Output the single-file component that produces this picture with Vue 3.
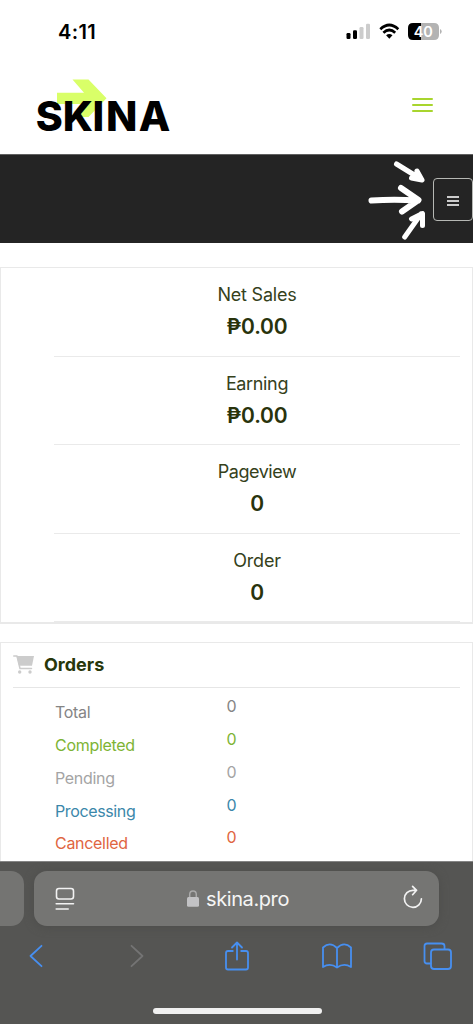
<script setup>
const stats = [
  { label: 'Net Sales', value: '₱0.00', cls: 'net' },
  { label: 'Earning', value: '₱0.00', cls: 'earning' },
  { label: 'Pageview', value: '0', cls: 'pageview' },
  { label: 'Order', value: '0', cls: 'order' },
]
const orders = [
  { label: 'Total', count: 0, cls: 'total' },
  { label: 'Completed', count: 0, cls: 'completed' },
  { label: 'Pending', count: 0, cls: 'pending' },
  { label: 'Processing', count: 0, cls: 'processing' },
  { label: 'Cancelled', count: 0, cls: 'cancelled' },
]
</script>

<template>
  <div class="screen">
    <div class="status">
      <span class="time">4:11</span>
      <svg class="indicators" width="98" height="20" viewBox="0 0 98 20">
        <rect x="0.5" y="11" width="4" height="6" rx="1.2" fill="#000" />
        <rect x="7" y="8.3" width="4" height="8.7" rx="1.2" fill="#000" />
        <rect x="13.500" y="5" width="4" height="12" rx="1.2" fill="#ccc" />
        <rect x="20" y="1.800" width="4" height="15.200" rx="1.200" fill="#ccc" />
        <g fill="none" stroke="#000" stroke-width="2.700">
          <path d="M34.300 7.200Q43.300-1.200 52.300 7.200" />
          <path d="M37.400 10.700Q43.300 5.300 49.200 10.700" />
        </g>
        <path d="M40.100 13.300Q43.300 10.700 46.500 13.300L43.300 16.700Z" fill="#000" />
        <path d="M67 1H75V18H67Q62 18 62 13V6Q62 1 67 1Z" fill="#000" />
        <path d="M75 1H88Q93 1 93 6V13Q93 18 88 18H75Z" fill="#b3b3b3" />
        <path d="M94 7Q95.700 7.600 95.700 9.500T94 12Z" fill="#b3b3b3" />
        <text x="77.300" y="14.700" text-anchor="middle" class="battery">40</text>
      </svg>
    </div>

    <header class="header">
      <svg class="logo" width="136" height="74" viewBox="0 0 136 74">
        <path d="M37.500 3.500H53.500L71.500 22.300L53.500 41H39L49 28H22V16.700H49Z" fill="#d9ff68" />
        <text x="0.7 27.700 57.500 71 103.700" y="55.300" class="brand">SKINA</text>
      </svg>
      <div class="burger"><i></i><i></i><i></i></div>
    </header>

    <nav class="band">
      <svg class="arrows" width="64" height="88" viewBox="365 154 64 88" fill="none" stroke="#fff" stroke-linecap="round" stroke-linejoin="round">
        <g stroke-width="5">
          <path d="M396.500 164L420 178.500M417 171L422 180L411.500 178" />
          <path d="M404.700 237L421 214M411.500 219L422.500 213.500L422.500 225.500" />
        </g>
        <path d="M416 173L420.500 179L412.500 177Z" fill="#fff" stroke-width="4" />
        <path stroke-width="6" d="M371.500 200.500Q394 199 418 200.500M401 188L418.500 200L402 211.500" />
      </svg>
      <div class="toggle"><i></i><i></i><i></i></div>
    </nav>

    <section class="stats">
      <div v-for="s in stats" :key="s.label" class="stat">
        <div class="label" :class="s.cls">{{ s.label }}</div>
        <div class="value">{{ s.value }}</div>
      </div>
    </section>

    <section class="orders">
      <div class="title">
        <svg width="22" height="20" viewBox="0 0 22 20">
          <path d="M3.500 1H21L19 10.700H6Z" fill="#ccc" />
          <path d="M.7 1H4L7 13.500H18.500" fill="none" stroke="#ccc" stroke-width="1.500" stroke-linecap="round" stroke-linejoin="round" />
          <circle cx="6.700" cy="17" r="1.700" fill="#ccc" />
          <circle cx="17" cy="17" r="1.700" fill="#ccc" />
        </svg>
        <span>Orders</span>
      </div>
      <div v-for="o in orders" :key="o.label" class="row" :class="o.cls">
        <span class="name">{{ o.label }}</span><span class="count">{{ o.count }}</span>
      </div>
    </section>

    <footer class="browser">
      <div class="tabs">
        <div class="prev"></div>
        <div class="address">
          <svg width="20" height="24" viewBox="0 0 20 24" fill="none" stroke="#f2f2f2" stroke-width="1.600" stroke-linecap="round">
            <rect x="1.500" y="1.500" width="17" height="10.500" rx="2.500" />
            <path d="M1.200 16.700H18.500M1.200 22H13.200" />
          </svg>
          <div class="site">
            <svg width="12" height="17" viewBox="0 0 12 17">
              <path d="M2.700 8V4.500Q2.700 1 6 1T9.300 4.500V8" fill="none" stroke="#aaa" stroke-width="1.500" />
              <rect y="7" width="12" height="9.700" rx="1.500" fill="#c2c2c4" />
            </svg>
            <span>skina.pro</span>
          </div>
          <svg class="reload" width="20" height="24" viewBox="0 0 20 24" fill="none" stroke="#f2f2f2" stroke-width="1.700" stroke-linecap="round" stroke-linejoin="round">
            <path d="M18.400 13.800A8.500 8.500 0 1 1 10 5.300H13.500M9.600 1.300L13.600 5.300L9.600 9.700" />
          </svg>
        </div>
      </div>
      <div class="tools">
        <svg width="14" height="24" viewBox="0 0 14 24"><path d="M12.500 1.800L1.500 12L12.500 22.200" /></svg>
        <svg class="off" width="14" height="24" viewBox="0 0 14 24"><path d="M1.500 1.800L12.500 12L1.500 22.200" /></svg>
        <svg width="26" height="32" viewBox="0 0 26 32"><path d="M8.800 11H4Q2 11 2 13V27.500Q2 29.500 4 29.500H22Q24 29.500 24 27.500V13Q24 11 22 11H17.200M13 19.500V2.700M8 7.500L13 2.500L18 7.500" /></svg>
        <svg width="30" height="28" viewBox="0 0 30 28"><path d="M15 6Q8-1 1 5.500V25Q8 20.500 15 25.500Q22 20.500 29 25V5.500Q22-1 15 6V25.500" /></svg>
        <svg width="30" height="28" viewBox="0 0 30 28"><path d="M7.500 21.500H4Q1.500 21.500 1.500 19V4Q1.500 1.500 4 1.500H18.500Q21.500 1.500 21.500 4V7" /><rect x="8" y="7.500" width="20" height="19.500" rx="3" /></svg>
      </div>
      <div class="home"></div>
    </footer>
  </div>
</template>

<style>
body { margin: 0; background: #fff; }
</style>

<style scoped>
* { box-sizing: border-box; }
.screen { width: 473px; height: 1024px; overflow: hidden; display: flex; flex-direction: column; background: #fff; font-family: Inter, "Liberation Sans", sans-serif; }
svg { display: block; flex: none; }
.status { height: 62px; flex: none; display: flex; justify-content: space-between; padding: 20px 29px 0 58px; }
.time { font-size: 20px; line-height: 24px; font-weight: 600; letter-spacing: .4px; }
.indicators { margin-top: 2px; }
.battery { font: 600 14.5px Inter, sans-serif; fill: #fff; }
.header { height: 92px; flex: none; display: flex; justify-content: space-between; padding: 14px 40px 0 35px; }
.brand { font: 800 41px Inter, sans-serif; fill: #000; }
.burger { display: flex; flex-direction: column; gap: 4px; margin-top: 22px; }
.burger i { width: 21px; height: 2px; border-radius: 1px; background: #a8d52e; }
.band { height: 88.500px; flex: none; background: #242424; border-top: 1px solid #606060; display: flex; justify-content: flex-end; align-items: flex-start; gap: 4px; }
.arrows { margin-top: -1px; }
.toggle { width: 40px; height: 43px; margin-top: 23px; border: 1px solid #b6b8b4; border-radius: 4px; display: flex; flex-direction: column; align-items: center; justify-content: center; gap: 2px; padding-top: 3px; }
.toggle i { width: 12px; height: 2px; background: #ccc; }
.stats { height: 357px; flex: none; margin-top: 24.500px; border: 1px solid #e9e9e9; border-bottom-width: 2px; padding: 0 12px 0 53px; }
.stat { height: 88.600px; border-bottom: 1.500px solid #eaeaea; text-align: center; color: #35411b; padding-top: 15px; }
.label { font-size: 18px; line-height: 24px; letter-spacing: -.22px; }
.pageview { letter-spacing: -.45px; }
.earning { letter-spacing: -.35px; }
.value { font-size: 21px; line-height: 26px; font-weight: 600; margin-top: 7px; letter-spacing: -.15px; color: #29330c; }
.orders { height: 219px; flex: none; margin-top: 18px; border: 1px solid #e9e9e9; border-bottom: 0; padding: 0 12px; }
.title { height: 45px; border-bottom: 1px solid #e6e6e6; display: flex; align-items: center; gap: 9px; font-size: 18px; font-weight: 700; color: #28370b; padding-bottom: 1px; margin-bottom: 9.200px; }
.row { height: 32.800px; display: flex; font-size: 16px; line-height: 20px; padding-left: 42px; letter-spacing: -.3px; }
.name { width: 171.500px; padding-top: 5px; }
.count { margin-top: -1px; }
.total { color: #858585; }
.completed { color: #7eb434; }
.pending { color: #a4a4a4; }
.processing { color: #3b87aa; letter-spacing: -.37px; }
.cancelled { color: #df6541; }
.browser { height: 163px; flex: none; background: #555553; border-top: 1px solid #858585; }
.tabs { display: flex; gap: 10px; padding-top: 9px; }
.prev { width: 24px; height: 55px; border-radius: 0 13px 13px 0; background: #747472; }
.address { width: 405px; height: 55px; border-radius: 13px; background: #757573; display: flex; align-items: center; justify-content: space-between; padding: 0 16px 0 21px; box-shadow: 0 1px 10px #4d4d4b; }
.site { display: flex; align-items: center; gap: 7px; color: #f5f5f5; font-size: 20px; letter-spacing: -.4px; margin-right: 2px; }
.reload { margin: -3px 0 0; }
.tools { height: 40px; margin: 10px 0 0 -14px; width: 502px; display: grid; grid-template-columns: repeat(5, 1fr); align-items: center; justify-items: center; fill: none; stroke: #478ff0; stroke-width: 1.800; stroke-linecap: round; stroke-linejoin: round; }
.off { stroke: #747474; }
.home { width: 169px; height: 6px; border-radius: 3px; background: #f0f0f0; margin: 32px 0 0 152.500px; }
</style>
